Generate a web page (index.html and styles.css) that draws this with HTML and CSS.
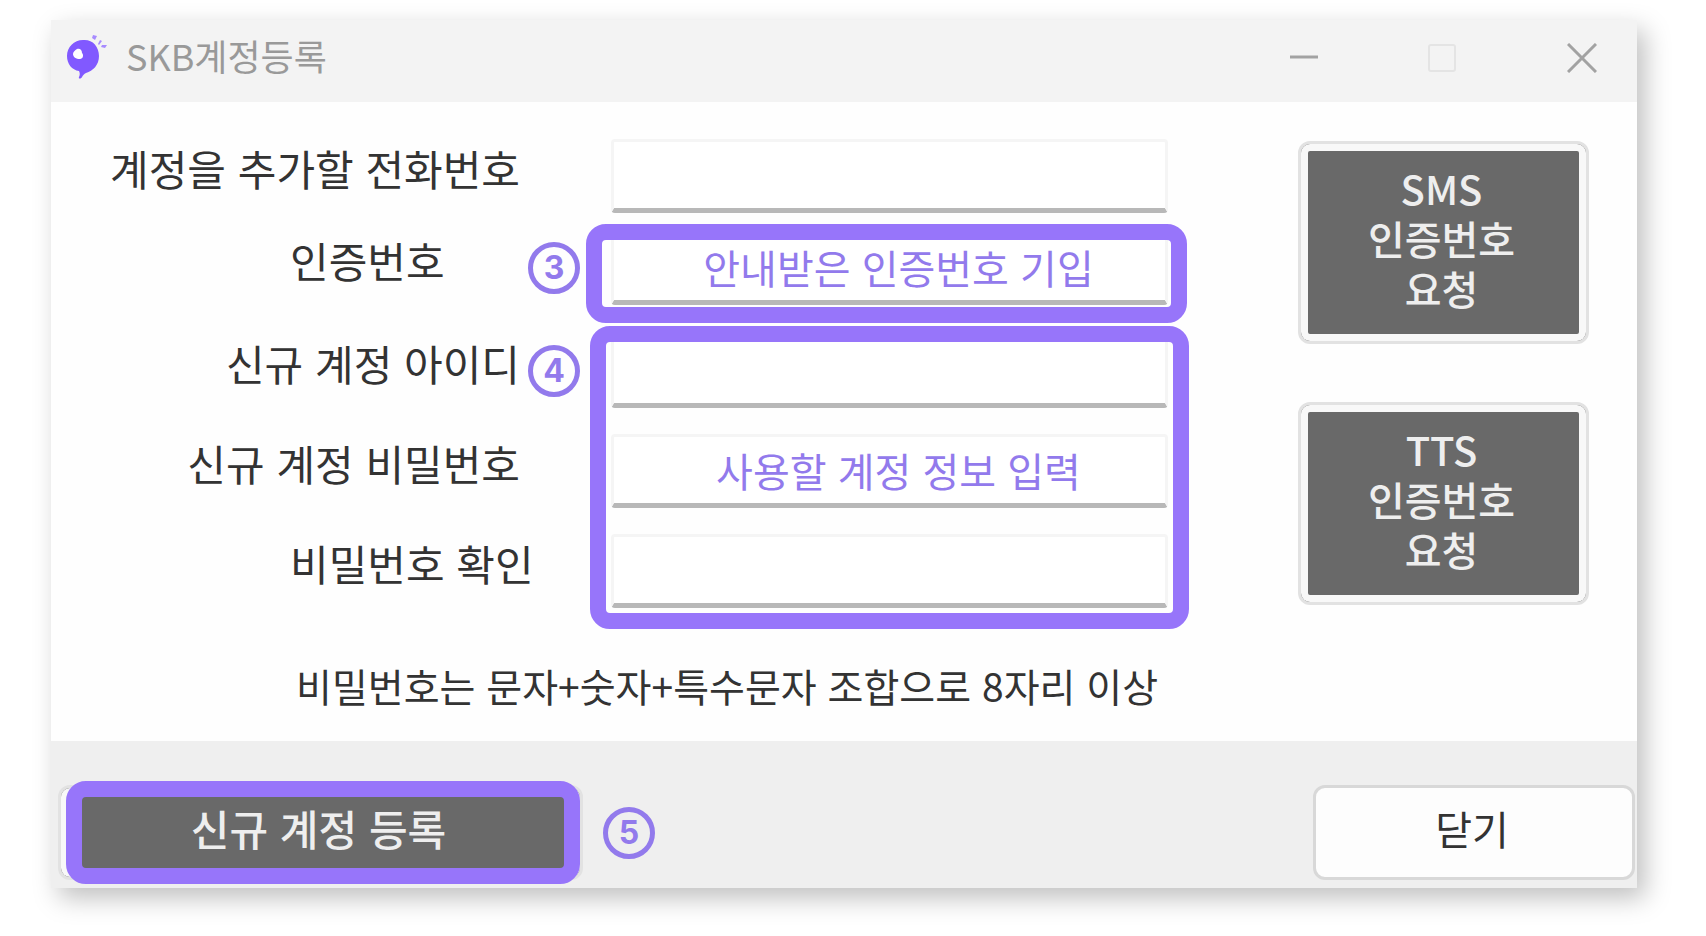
FILE: index.html
```html
<!DOCTYPE html>
<html lang="ko">
<head>
<meta charset="utf-8">
<meta name="viewport" content="width=device-width, initial-scale=1">
<title>SKB계정등록</title>
<link rel="stylesheet" href="styles.css">
</head>
<body>
<main class="window">
  <header class="titlebar">
    <svg class="logo" viewBox="0 0 42 46" aria-hidden="true">
      <path d="M17 5C26 4 33 11 33 21c0 9-6 15-13 17-2 1-3 2-4 4-1 2-4 2-3 0 1-2 1-4 0-6C6 35 1 29 1 21 1 12 8 5 17 5z" fill="#8159ff"/>
      <path d="M11 14c3-1 5 1 5 4 2 2 1 6-2 6-4 0-7-2-7-5 0-2 2-4 4-5z" fill="#fff"/>
      <path d="M27 0l4 1-2 4-3-2zM34 5l2 1-3 4-1-1zM36 10l5 0-2 3-4-1z" fill="#a78bff"/>
    </svg>
    <h1 class="title">SKB계정등록</h1>
    <div class="controls">
      <button class="control" type="button" aria-label="최소화"><svg viewBox="0 0 30 30" aria-hidden="true"><path d="M1 14h28" stroke="#a2a2a2" stroke-width="3"/></svg></button>
      <button class="control" type="button" aria-label="최대화" disabled><svg viewBox="0 0 30 30" aria-hidden="true"><rect x="1" y="2" width="26" height="26" rx="2" fill="none" stroke="#e4e4e4" stroke-width="2"/></svg></button>
      <button class="control" type="button" aria-label="창 닫기"><svg viewBox="0 0 30 30" aria-hidden="true"><path d="M1 1l28 28M29 1L1 29" stroke="#a2a2a2" stroke-width="3"/></svg></button>
    </div>
  </header>

  <form class="form" id="account">
    <div class="fields">
      <div class="group group--verify">
        <label class="label" for="phone">계정을 추가할 전화번호</label>
        <input class="input" id="phone" type="tel">
        <label class="label label--indent" for="code">인증번호</label>
        <span class="badge">3</span>
        <input class="input" id="code" type="text" placeholder="안내받은 인증번호 기입">
        <span class="mark mark--code"></span>
      </div>
      <div class="group group--account">
        <label class="label" for="user">신규 계정 아이디</label>
        <span class="badge">4</span>
        <input class="input" id="user" type="text">
        <label class="label" for="pass">신규 계정 비밀번호</label>
        <input class="input" id="pass" type="password" placeholder="사용할 계정 정보 입력">
        <label class="label label--indent" for="confirm">비밀번호 확인</label>
        <input class="input" id="confirm" type="password">
        <span class="mark mark--account"></span>
      </div>
      <p class="hint">비밀번호는 문자+숫자+특수문자 조합으로 8자리 이상</p>
    </div>
    <div class="requests">
      <button class="button button--request" type="button">SMS<br>인증번호<br>요청</button>
      <button class="button button--request" type="button">TTS<br>인증번호<br>요청</button>
    </div>
  </form>

  <footer class="footer">
    <div class="submit">
      <button class="button button--submit" type="submit" form="account">신규 계정 등록</button>
      <span class="mark mark--submit"></span>
    </div>
    <span class="badge">5</span>
    <button class="button button--close" type="button">닫기</button>
  </footer>
</main>
</body>
</html>
```

FILE: styles.css
```css
* {
  box-sizing: border-box;
}

:root {
  --accent: #9775fa;
  --accent-text: #927aec;
}

body {
  margin: 0;
  padding: 20px 69px 48px 51px;
  background: #fff;
  color: #333;
  font-family: "Noto Sans CJK KR", "Noto Sans", sans-serif;
  font-size: 42px;
  line-height: 50px;
}

button,
input {
  font: inherit;
  color: inherit;
}

.window {
  background: #fefefe;
  box-shadow: 8px 10px 24px rgba(0, 0, 0, 0.25);
}

.titlebar {
  display: flex;
  align-items: center;
  padding: 10px 33px 16px 15px;
  background: #f3f3f3;
}

.logo {
  width: 42px;
  height: 46px;
}

.title {
  margin: 0 0 0 18px;
  padding-bottom: 6px;
  color: #999;
  font-size: 36px;
  font-weight: 400;
}

.controls {
  display: flex;
  gap: 95px;
  margin-left: auto;
}

.control {
  display: flex;
  align-items: center;
  justify-content: center;
  width: 44px;
  height: 44px;
  padding: 0;
  border: 0;
  background: none;
}

.control svg {
  width: 30px;
  height: 30px;
}

.form {
  display: flex;
  gap: 130px;
  padding: 37px 48px 31px 55px;
}

.fields {
  flex: 1;
  min-width: 0;
}

.group {
  display: grid;
  grid-template-columns: minmax(0, 414fr) 91px minmax(0, 557fr);
  grid-auto-rows: 74px;
}

.group--verify {
  row-gap: 18px;
  margin-bottom: 29px;
}

.group--account {
  row-gap: 26px;
}

.label {
  grid-column: 1;
  place-self: center end;
  padding-bottom: 16px;
  white-space: nowrap;
}

.label--indent {
  justify-self: start;
  padding-left: 184px;
}

.input {
  grid-column: 3;
  min-width: 0;
  padding: 0 0 0 18px;
  border: 3px solid #f5f5f5;
  border-bottom: 5px solid #b8b8b8;
  border-radius: 4px;
  background: #fff;
  font-size: 40px;
  text-align: center;
}

.input::placeholder {
  color: var(--accent-text);
  opacity: 1;
}

.badge {
  display: grid;
  place-items: center;
  width: 52px;
  height: 52px;
  border: 5px solid var(--accent-text);
  border-radius: 50%;
  color: var(--accent-text);
  font-family: Inter, sans-serif;
  font-size: 32px;
  font-weight: 700;
  line-height: 40px;
}

.group .badge {
  grid-column: 2;
  align-self: center;
  margin-left: 8px;
}

.mark {
  position: relative;
  grid-column: 3;
  pointer-events: none;
}

.mark::after {
  content: "";
  position: absolute;
  border: 16px solid var(--accent);
  border-radius: 20px;
}

.mark--code {
  grid-row: 2;
}

.mark--code::after {
  inset: -7px -19px -18px -25px;
}

.mark--account {
  grid-row: 1 / 4;
}

.mark--account::after {
  inset: -8px -21px -21px -21px;
}

.group--verify > :nth-child(-n + 2) {
  grid-row: 1;
}

.group--verify > :nth-child(n + 3) {
  grid-row: 2;
}

.group--account > :nth-child(-n + 3) {
  grid-row: 1;
}

.group--account > :nth-child(4),
.group--account > :nth-child(5) {
  grid-row: 2;
}

.group--account > :nth-child(6),
.group--account > :nth-child(7) {
  grid-row: 3;
}

.hint {
  margin: 52px 0 0;
  padding-left: 190px;
  font-size: 39px;
  white-space: nowrap;
}

.requests {
  display: flex;
  flex-direction: column;
  gap: 58px;
  width: 291px;
  padding-top: 2px;
}

.button {
  padding: 0 4px 10px 0;
  border: 3px solid #e2e2e2;
  border-radius: 12px;
  font-size: 40px;
}

.button--request,
.button--submit {
  background: #696969;
  box-shadow: inset 0 0 0 7px #f8f8f8;
  color: #eee;
  font-weight: 500;
}

.button--request {
  height: 203px;
}

.footer {
  display: flex;
  align-items: center;
  padding: 44px 2px 8px 7px;
  background: #efefef;
}

.submit {
  position: relative;
  flex: 0 1 525px;
  margin-right: 20px;
}

.button--submit {
  display: block;
  width: 100%;
  height: 95px;
  font-size: 42px;
}

.mark--submit {
  position: static;
}

.mark--submit::after {
  inset: -4px 3px -4px 8px;
}

.button--close {
  width: 322px;
  height: 95px;
  margin-left: auto;
  border-color: #d8d8d8;
  background: #fdfdfd;
}
```
